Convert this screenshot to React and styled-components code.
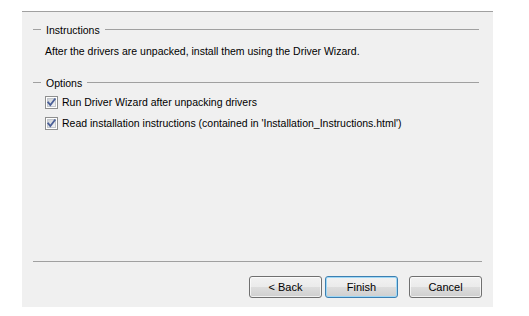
import React from 'react'
import styled, { createGlobalStyle } from 'styled-components'

const GlobalStyle = createGlobalStyle`
  html, body {
    margin: 0;
    padding: 0;
    background: #ffffff;
  }
  body {
    font-family: "Liberation Sans", Arial, sans-serif;
    font-size: 10.5px;
    color: #000000;
  }
`

const Page = styled.div`
  width: 529px;
  height: 316px;
  padding: 11px 0 0 22px;
  box-sizing: border-box;
`

const Panel = styled.div`
  width: 471px;
  height: 296px;
  box-sizing: border-box;
  border-top: 1px solid #a0a0a0;
  background: #f0f0f0;
  display: flex;
  flex-direction: column;
  padding: 12px 14px 9px 11px;
`

const GroupHeader = styled.div`
  display: flex;
  align-items: flex-start;
  height: 13px;
  line-height: 13px;
  margin-top: ${p => p.$top || 0}px;

  &:before {
    content: '';
    width: 8px;
    height: 1px;
    margin-top: 5px;
    background: #a0a0a0;
    margin-right: 5px;
  }

  &:after {
    content: '';
    flex: 1;
    height: 1px;
    margin-top: 5px;
    background: #a0a0a0;
    margin-left: 5px;
  }
`

const GroupBody = styled.div`
  padding-left: 12px;
  margin-top: ${p => p.$top || 0}px;
  display: flex;
  flex-direction: column;
  gap: 8px;
`

const Line = styled.div`
  height: 13px;
  line-height: 13px;
  white-space: nowrap;
`

const CheckRow = styled.label`
  display: flex;
  align-items: center;
  gap: 4px;
  height: 13px;
  line-height: 13px;
  white-space: nowrap;
  user-select: none;
`

const Box = styled.svg`
  display: block;
  flex: none;
`

const Spacer = styled.div`
  flex: 1;
`

const Separator = styled.div`
  height: 1px;
  background: #a0a0a0;
  margin-right: -3px;
`

const Buttons = styled.div`
  display: flex;
  justify-content: flex-end;
  margin-top: 14px;
  margin-right: -3px;
`

const Button = styled.button`
  width: 73px;
  height: 22px;
  box-sizing: border-box;
  margin-left: ${p => p.$gap || 0}px;
  font-family: "Liberation Sans", Arial, sans-serif;
  font-size: 11px;
  color: #000000;
  padding: 0;
  border-radius: 3px;
  border: 1px solid ${p => (p.$default ? '#3c7fb1' : '#707070')};
  background: linear-gradient(
    to bottom,
    #f2f2f2 0%,
    #ebebeb 50%,
    #dddddd 51%,
    #cfcfcf 100%
  );
  box-shadow: inset 0 0 0 1px
    ${p => (p.$default ? '#9fd8f6' : 'rgba(255, 255, 255, 0.7)')};
  cursor: default;
`

const CheckBox = () => (
  <Box width="13" height="13" viewBox="0 0 13 13">
    <defs>
      <linearGradient id="cbfill" x1="0" y1="0" x2="1" y2="1">
        <stop offset="0" stopColor="#cbcfd5" />
        <stop offset="1" stopColor="#f6f6f6" />
      </linearGradient>
    </defs>
    <rect x="0.5" y="0.5" width="12" height="12" fill="#ffffff" stroke="#8e8f8f" />
    <rect x="2.5" y="2.5" width="8" height="8" fill="url(#cbfill)" stroke="#c2c6cc" />
    <path
      d="M3.2 6.4 L5.3 9 L9.8 3.2"
      fill="none"
      stroke="#4a5f97"
      strokeWidth="1.8"
      strokeLinecap="square"
    />
  </Box>
)

export default function App() {
  return (
    <>
      <GlobalStyle />
      <Page>
        <Panel>
          <GroupHeader>Instructions</GroupHeader>
          <GroupBody $top={8}>
            <Line>After the drivers are unpacked, install them using the Driver Wizard.</Line>
          </GroupBody>

          <GroupHeader $top={19}>Options</GroupHeader>
          <GroupBody $top={6}>
            <CheckRow>
              <CheckBox />
              Run Driver Wizard after unpacking drivers
            </CheckRow>
            <CheckRow>
              <CheckBox />
              Read installation instructions (contained in 'Installation_Instructions.html')
            </CheckRow>
          </GroupBody>

          <Spacer />
          <Separator />
          <Buttons>
            <Button>&lt; Back</Button>
            <Button $default $gap={3}>Finish</Button>
            <Button $gap={11}>Cancel</Button>
          </Buttons>
        </Panel>
      </Page>
    </>
  )
}
